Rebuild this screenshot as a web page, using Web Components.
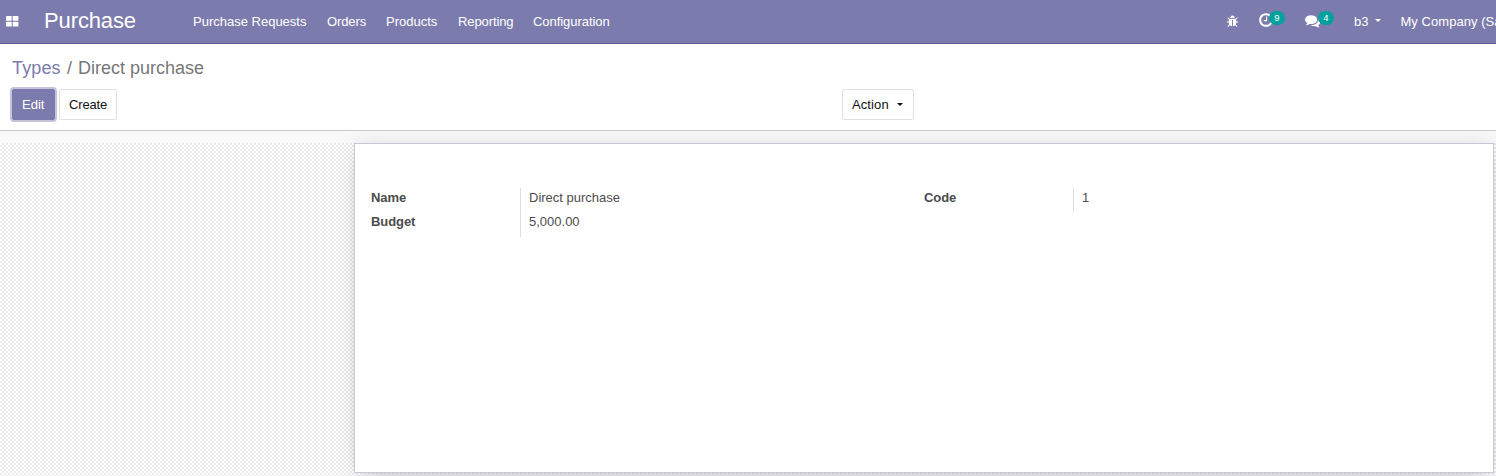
<!DOCTYPE html>
<html lang="en">
<head>
<meta charset="utf-8">
<title>Purchase</title>
<style>
html,body{margin:0;height:100%;overflow:hidden}
body{font:13px/20px "Liberation Sans",Arial,sans-serif;color:#4c4c4c;background:#fff}
</style>
</head>
<body>
<purchase-app></purchase-app>
<script>
function define(name, html) {
  const t = document.createElement('template');
  t.innerHTML = html;
  customElements.define(name, class extends HTMLElement {
    constructor() {
      super();
      this.attachShadow({mode: 'open'}).appendChild(t.content.cloneNode(true));
    }
  });
}
const icons = {
  bug: 'M1696 960q0 26-19 45t-45 19h-224q0 171-67 290l208 209q19 19 19 45t-19 45q-18 19-45 19t-45-19l-198-197q-5 5-15 13t-42 28.5-65 36.5-82 29-97 13v-896h-128v896q-51 0-101.5-13.5t-87-33-66-39-43.5-32.5l-15-14-183 207q-20 21-48 21-24 0-43-16-19-18-20.5-44.5t15.5-46.5l202-227q-58-114-58-274h-224q-26 0-45-19t-19-45 19-45 45-19h224v-294l-173-173q-19-19-19-45t19-45 45-19 45 19l173 173h844l173-173q19-19 45-19t45 19 19 45-19 45l-173 173v294h224q26 0 45 19t19 45zm-480-576h-640q0-133 93.5-226.5t226.5-93.5 226.5 93.5 93.5 226.5z',
  clock: 'M1024 544v448q0 14-9 23t-23 9h-320q-14 0-23-9t-9-23v-64q0-14 9-23t23-9h224v-352q0-14 9-23t23-9h64q14 0 23 9t9 23zm416 352q0-148-73-273t-198-198-273-73-273 73-198 198-73 273 73 273 198 198 273 73 273-73 198-198 73-273zm224 0q0 209-103 385.5t-279.5 279.5-385.5 103-385.5-103-279.5-279.5-103-385.5 103-385.5 279.5-279.5 385.5-103 385.5 103 279.5 279.5 103 385.5z',
  comments: 'M1408 768q0 139-94 257t-256.5 186.5-353.5 68.5q-86 0-176-16-124 88-278 128-36 9-86 16h-3q-11 0-20.5-8t-11.5-21q-1-3-1-6.5t.5-6.5 2-6l2.5-5 3.5-5.5 4-5 4.5-5 4-4.5q5-6 23-25t26-29.5 22.5-29 25-38.5 20.5-44q-124-72-195-177t-71-224q0-139 94-257t256.5-186.5 353.5-68.5 353.5 68.5 256.5 186.5 94 257zm384 256q0 120-71 224.5t-195 176.5q10 24 20.5 44t25 38.5 22.5 29 26 29.5 23 25q1 1 4 4.5t4.5 5 4 5 3.5 5.5l2.5 5 2 6 .5 6.5-1 6.5q-3 14-13 22t-22 7q-50-7-86-16-154-40-278-128-90 16-176 16-271 0-472-132 58 4 88 4 161 0 309-45t264-129q125-92 192-212t67-254q0-77-23-152 129 71 204 178t75 230z'
};
customElements.define('ui-icon', class extends HTMLElement {
  constructor() {
    super();
    this.attachShadow({mode: 'open'});
  }
  connectedCallback() {
    this.shadowRoot.innerHTML = `<style>:host{display:block;flex:none;width:16px;height:16px}svg{display:block;width:100%;height:100%;overflow:visible}</style>
      <svg viewBox="0 0 1792 1792" fill="currentColor"><path d="${icons[this.getAttribute('name')]}"/></svg>`;
  }
});
define('apps-icon', `<style>:host{display:block;flex:none;width:13px;height:11px}svg{display:block}</style>
<svg width="13" height="11" fill="currentColor"><rect width="5.7" height="4.8" rx=".6"/><rect x="6.7" width="5.7" height="4.8" rx=".6"/><rect y="5.8" width="5.7" height="4.8" rx=".6"/><rect x="6.7" y="5.8" width="5.7" height="4.8" rx=".6"/></svg>`);
define('ui-caret', `<style>:host{display:block;flex:none;border:3px solid transparent;border-top-color:currentColor;border-bottom:0;width:0;height:0}</style>`);
define('ui-badge', `<style>:host{display:block;flex:none;box-sizing:border-box;width:16px;height:14px;border-radius:7px;background:#00a09d;color:#fff;font-size:9.5px;line-height:14px;text-align:center}</style><slot></slot>`);
define('nav-item', `<style>:host{display:block;flex:none;white-space:nowrap}</style><slot></slot>`);
define('app-navbar', `<style>
:host{display:flex;align-items:flex-start;box-sizing:border-box;height:44px;background:#7c7bad;border-bottom:1px solid #5f5e97;color:#fff;overflow:hidden;line-height:20px}
.apps{margin:16px 0 0 6px}
.brand{width:149px;margin:8px 0 0 25px;font-size:22px;line-height:26px;letter-spacing:-.12px}
nav{display:flex;padding-top:12px}
.m1{width:134px}.m2{width:59px;letter-spacing:-.1px}.m3{width:72px}.m4{width:75px;letter-spacing:-.1px}.m5{letter-spacing:-.05px}
.tray{display:flex;width:270px;margin-left:auto}
.bug{width:13px;height:13px;margin:15px 0 0}
.clock{width:16px;height:16px;margin:12px 0 0 19px}
.comments{width:15.5px;height:15.5px;margin:13px 0 0 20px}
ui-badge{margin-top:11px}
.b9{margin-left:-5px}
.b4{margin-left:-2.5px}
.user{margin:12px 0 0 20px}
ui-caret{margin:19px 0 0 7px}
.company{margin:12px 0 0 19px;letter-spacing:.05px}
</style>
<apps-icon class="apps"></apps-icon><nav-item class="brand">Purchase</nav-item>
<nav><nav-item class="m1">Purchase Requests</nav-item><nav-item class="m2">Orders</nav-item><nav-item class="m3">Products</nav-item><nav-item class="m4">Reporting</nav-item><nav-item class="m5">Configuration</nav-item></nav>
<div class="tray"><ui-icon class="bug" name="bug"></ui-icon><ui-icon class="clock" name="clock"></ui-icon><ui-badge class="b9">9</ui-badge><ui-icon class="comments" name="comments"></ui-icon><ui-badge class="b4">4</ui-badge><nav-item class="user">b3</nav-item><ui-caret></ui-caret><nav-item class="company">My Company (Sa</nav-item></div>`);
define('ui-button', `<style>
:host{display:flex;align-items:flex-start;box-sizing:border-box;height:31px;padding:5px 9px;border:1px solid #dee2e6;border-radius:2px;background:#fff;color:#111;line-height:20px;white-space:nowrap}
:host([primary]){background:#7c7bad;border-color:#7c7bad;color:#fff;box-shadow:0 0 0 2px rgba(124,123,173,.45)}
</style><slot></slot>`);
define('control-panel', `<style>
:host{display:block;box-sizing:border-box;height:87px;border-bottom:1px solid #c8c8cb;background:#fff}
.crumbs{display:flex;padding:11px 0 0 12px;height:34px;font-size:18px;line-height:26px;color:#777;white-space:pre}
.crumbs a{color:#7c7bad;width:49px;letter-spacing:.15px}
.crumbs i{font-style:normal;color:#777;margin:0 6px}
.row{display:flex}
.edit{width:43px;margin-left:12px}.create{width:58px;margin-left:4px;letter-spacing:-.15px}.action{width:72px;margin-left:725px;letter-spacing:.1px}
ui-caret{margin:8px 0 0 8px}
</style>
<div class="crumbs"><a>Types</a><i>/</i><span>Direct purchase</span></div>
<div class="row"><ui-button class="edit" primary>Edit</ui-button><ui-button class="create">Create</ui-button><ui-button class="action">Action<ui-caret></ui-caret></ui-button></div>`);
define('form-field', `<style>
:host{display:flex;box-sizing:border-box;line-height:20px}
.label{width:149px;font-weight:bold;letter-spacing:-.08px}
.value{flex:1;border-left:1px solid #ddd;padding-left:8px}
</style><div class="label"><slot name="label"></slot></div><div class="value"><slot></slot></div>`);
define('form-sheet', `<style>
:host{display:grid;grid-template-columns:553px 1fr;align-items:start;box-sizing:border-box;width:1140px;height:330px;padding:44px 16px 0;border:1px solid #c8c8d3;background:#fff;box-shadow:0 5px 20px -15px rgba(0,0,0,.6),0 0 20px rgba(0,0,0,.09)}
form-field{height:24px}.last{height:25px}
</style>
<div><form-field><span slot="label">Name</span>Direct purchase</form-field><form-field class="last"><span slot="label">Budget</span>5,000.00</form-field></div>
<form-field><span slot="label">Code</span><span>1</span></form-field>`);
define('form-view', `<style>
:host{display:block;box-sizing:border-box;flex:1;padding:12px 0 0 354px;overflow:hidden;background:linear-gradient(#f9f9f9,#f9f9f9) 0 0/100% 12px no-repeat,repeating-conic-gradient(#ebebeb 0 25%,#fff 0 50%) 0 0/4px 4px}
</style><form-sheet></form-sheet>`);
define('purchase-app', `<style>:host{display:flex;flex-direction:column;height:476px;overflow:hidden}</style>
<app-navbar></app-navbar><control-panel></control-panel><form-view></form-view>`);
</script>
</body>
</html>
